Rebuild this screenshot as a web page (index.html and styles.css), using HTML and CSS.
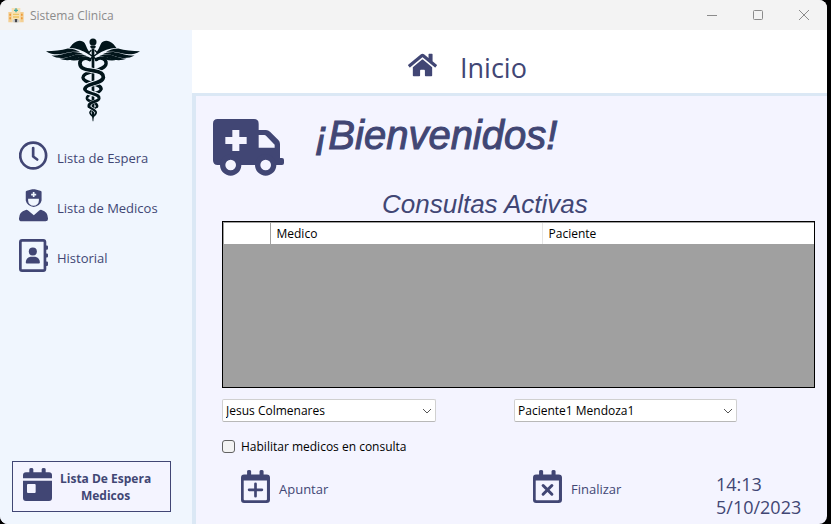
FILE: index.html
```html
<!DOCTYPE html>
<html lang="es">
<head>
<meta charset="utf-8">
<title>Sistema Clinica</title>
<link rel="stylesheet" href="styles.css">
</head>
<body>
<div class="window">
  <header class="titlebar">
    <svg class="app-icon" viewBox="0 0 48 48" aria-hidden="true">
      <path fill="#f3cf93" d="M1 15h11v31H1zM36 15h11v31H36z"/>
      <path fill="#f9e2b4" d="M11 3h26v43H11z"/>
      <path fill="#ee9b3a" d="M4 20h5v6H4zM4 31h5v6H4zM39 20h5v6h-5zM39 31h5v6h-5z"/>
      <path fill="#3fa9a5" d="M22 4h4v4h4v4h-4v4h-4v-4h-4V8h4z"/>
      <path fill="#e9b73c" d="M16 20h4v4h-4zM22 20h4v4h-4zM28 20h4v4h-4zM16 28h4v4h-4zM22 28h4v4h-4zM28 28h4v4h-4z"/>
      <path fill="#45464d" d="M20 36h8v10h-8z"/>
      <path fill="#c9ced3" d="M14 38h6v8h-6zM28 38h6v8h-6z"/>
    </svg>
    <span class="titlebar-text">Sistema Clinica</span>
    <div class="window-controls">
      <button type="button" aria-label="Minimizar"><svg viewBox="0 0 12 12"><path d="M1 6.500h10"/></svg></button>
      <button type="button" aria-label="Maximizar"><svg viewBox="0 0 12 12"><rect x="1.500" y="1.500" width="9" height="9" rx="1"/></svg></button>
      <button type="button" aria-label="Cerrar"><svg viewBox="0 0 12 12"><path d="M1 1l10 10M11 1L1 11"/></svg></button>
    </div>
  </header>

  <div class="body">
    <aside class="sidebar">
      <svg class="logo" viewBox="138 115 280 250" aria-hidden="true">
        <g fill="#02151b">
          <circle cx="278" cy="127" r="10.500"/>
          <path d="M272 137h12l3 5-5 4h-8l-5-4z"/>
          <g id="wing">
            <path d="M268 158C262 150 259 142 254 131C249 123 238 121 229 125C219 129 213 137 208 145C225 144 246 151 266 164z"/>
            <path d="M138 154C160 154 184 151 203 146C218 146 230 151 240 157C225 154 211 156 199 159C178 166 155 165 138 154z"/>
            <path d="M154 167C180 167 197 159 214 157C229 156 242 159 251 164C235 162 223 165 212 169C195 176 171 177 154 167z"/>
            <path d="M178 177C200 176 213 168 226 165C240 163 252 165 260 169C247 169 238 172 230 175C215 182 194 183 178 177z"/>
            <path d="M207 179C220 179 230 173 241 171C253 170 263 172 270 177C258 174 250 175 243 178C230 182 216 183 207 179z"/>
          </g>
          <use href="#wing" transform="translate(556 0) scale(-1 1)"/>
          <path d="M274 146h8v190l-3 27h-2l-3-27z"/>
        </g>
        <path fill="none" stroke="#02151b" stroke-width="4" stroke-linecap="round" d="M266 162l24 18M290 162l-24 18M272 152l-8 8M284 152l8 8"/>
        <!-- Back snake, then the front one with a light edge where they cross -->
        <g fill="none" stroke-linecap="round" stroke="#02151b">
          <path stroke-width="10" d="M288 179C302 170 318 178 317 191C316 203 300 208 278 214C258 219 247 224 248 233C249 243 262 246 278 251C292 255 302 258 302 267"/>
          <path stroke-width="8" d="M302 267C302 275 292 277 278 281C266 284 259 288 260 295C261 301 269 303 278 306C287 309 291 313 290 319"/>
          <path stroke-width="5" d="M290 319C289 325 268 328 269 338C270 343 274 346 278 349"/>
        </g>
        <g fill="none">
          <path stroke="#f0f6fe" stroke-width="16" d="M238 195C242 207 258 209 278 212C298 215 310 221 309 232C307 243 294 247 278 251C264 255 254 259 254 267C254 275 264 277 278 281C290 284 297 288 296 295"/>
          <path stroke="#f0f6fe" stroke-width="10" d="M296 295C295 301 287 303 278 306C269 309 265 313 266 319C267 325 288 328 287 338"/>
          <g stroke="#02151b" stroke-linecap="round">
            <path stroke-width="11" d="M268 179C254 170 238 178 239 191C240 207 258 209 278 212C298 215 310 221 309 232C307 243 294 247 278 251C264 255 254 259 254 267"/>
            <path stroke-width="9" d="M254 267C254 275 264 277 278 281C290 284 297 288 296 295C295 301 287 303 278 306C269 309 265 313 266 319"/>
            <path stroke-width="6" d="M266 319C267 325 288 328 287 338C286 343 282 346 279 348"/>
          </g>
        </g>
      </svg>

      <nav class="nav">
        <button type="button" class="nav-item">
          <svg class="icon" viewBox="57 28 86 98" aria-hidden="true">
            <circle cx="99" cy="77" r="38.500" fill="none" stroke="currentColor" stroke-width="8"/>
            <path d="M99 55v25l12 9" fill="none" stroke="currentColor" stroke-width="8" stroke-linecap="round" stroke-linejoin="round"/>
          </svg>
          <span>Lista de Espera</span>
        </button>
        <button type="button" class="nav-item">
          <svg class="icon" viewBox="57 177 86 98" aria-hidden="true">
            <path fill="currentColor" fill-rule="evenodd" d="M77 185q0-2 3-3l16-4q4-1 8 0l16 4q4 1 4 3v26a24 24 0 0 1-47 0zM98 186v5h-5v5h5v5h5v-5h5v-5h-5v-5zM84 206v5a16 16 0 0 0 32 0v-5z"/>
            <path fill="currentColor" d="M77 239q4-1 7 2l17 14 16-14q3-3 7-2q19 6 19 25v2q0 7-7 7H65q-8 0-8-7v-2q0-19 20-25z"/>
          </svg>
          <span>Lista de Medicos</span>
        </button>
        <button type="button" class="nav-item">
          <svg class="icon" viewBox="57 327 86 98" aria-hidden="true">
            <rect x="61" y="331" width="73" height="90" rx="5" fill="none" stroke="currentColor" stroke-width="8"/>
            <path fill="currentColor" d="M136 346h4q3 0 3 3v7q0 3-3 3h-4zM136 370h4q3 0 3 3v6q0 3-3 3h-4zM136 394h4q3 0 3 3v7q0 3-3 3h-4z"/>
            <circle cx="98" cy="364" r="12" fill="currentColor"/>
            <path fill="currentColor" d="M91 380h14q14 4 14 17q0 3-3 3H80q-3 0-3-3q0-13 14-17z"/>
          </svg>
          <span>Historial</span>
        </button>
      </nav>

      <button type="button" class="waiting-button">
        <svg class="icon" viewBox="69 81 87 99" aria-hidden="true">
          <path fill="currentColor" fill-rule="evenodd" d="M69 112v-9q0-9 9-9h10v-9q0-4 6-4t6 4v9h25v-9q0-4 6-4t6 4v9h10q9 0 9 9v9zM69 119h87v52q0 9-9 9H78q-9 0-9-9zM84 129q-3 0-3 3v21q0 3 3 3h20q3 0 3-3v-21q0-3-3-3z"/>
        </svg>
        <span>Lista De Espera<br>Medicos</span>
      </button>
    </aside>

    <div class="content">
      <div class="page-header">
        <svg class="home-icon" viewBox="0 0 576 512" aria-hidden="true">
          <path fill="currentColor" d="M280.37 148.26L96 300.11V464a16 16 0 0 0 16 16l112.06-.29a16 16 0 0 0 15.92-16V368a16 16 0 0 1 16-16h64a16 16 0 0 1 16 16v95.64a16 16 0 0 0 16 16.05L464 480a16 16 0 0 0 16-16V300L295.67 148.26a12.19 12.19 0 0 0-15.3 0zM571.6 251.47L488 182.56V44.05a12 12 0 0 0-12-12h-56a12 12 0 0 0-12 12v72.61L318.47 43a48 48 0 0 0-61 0L4.34 251.47a12 12 0 0 0-1.600 16.900l25.500 31A12 12 0 0 0 45.150 301l235.220-193.740a12.190 12.190 0 0 1 15.300 0L530.900 301a12 12 0 0 0 16.900-1.600l25.500-31a12 12 0 0 0-1.700-16.930z"/>
        </svg>
        <span>Inicio</span>
      </div>

      <main class="main">
        <div class="welcome">
          <svg class="ambulance" viewBox="0 0 213 171" aria-hidden="true">
            <path fill="currentColor" fill-rule="evenodd" d="M14 0h109q14 0 14 14v19h22q7 0 12 5l25 25q5 5 5 12v42h6q6 0 6 6v9q0 6-6 6H14q-14 0-14-14V14Q0 0 14 0zM58 33v21H37v21h21v21h21V75h22V54H79V33zM137 48v38h48v-9l-26-27q-2-2-5-2z"/>
            <circle cx="53" cy="138" r="24" fill="#f4f4ff" stroke="currentColor" stroke-width="16"/>
            <circle cx="158" cy="138" r="24" fill="#f4f4ff" stroke="currentColor" stroke-width="16"/>
          </svg>
          <h1>¡Bienvenidos!</h1>
        </div>

        <h2>Consultas Activas</h2>

        <div class="grid-box">
          <table>
            <thead>
              <tr><td class="corner"></td><th scope="col">Medico</th><th scope="col">Paciente</th></tr>
            </thead>
          </table>
        </div>

        <div class="selectors">
          <div class="combo">
            <select aria-label="Medico"><option>Jesus Colmenares</option></select>
            <svg viewBox="0 0 10 6" aria-hidden="true"><path d="M1 1l4 4 4-4"/></svg>
          </div>
          <div class="combo combo-wide">
            <select aria-label="Paciente"><option>Paciente1 Mendoza1</option></select>
            <svg viewBox="0 0 10 6" aria-hidden="true"><path d="M1 1l4 4 4-4"/></svg>
          </div>
        </div>

        <label class="check"><input type="checkbox"><span>Habilitar medicos en consulta</span></label>

        <div class="actions">
          <button type="button" class="action">
            <svg class="icon" viewBox="94 267 86 98" aria-hidden="true">
              <path fill="currentColor" fill-rule="evenodd" d="M94 289q0-9 9-9h9v-9q0-4 6-4t6 4v9h25v-9q0-4 6-4t6 4v9h9q10 0 10 9v67q0 9-10 9h-67q-9 0-9-9zM102 298v56q0 3 3 3h63q3 0 3-3v-56z"/>
              <path d="M137 308v37M118 326h38" stroke="currentColor" stroke-width="8" stroke-linecap="round"/>
            </svg>
            <span>Apuntar</span>
          </button>
          <button type="button" class="action">
            <svg class="icon" viewBox="94 267 86 98" aria-hidden="true">
              <path fill="currentColor" fill-rule="evenodd" d="M94 289q0-9 9-9h9v-9q0-4 6-4t6 4v9h25v-9q0-4 6-4t6 4v9h9q10 0 10 9v67q0 9-10 9h-67q-9 0-9-9zM102 298v56q0 3 3 3h63q3 0 3-3v-56z"/>
              <path d="M124 313l26 26M150 313l-26 26" stroke="currentColor" stroke-width="9" stroke-linecap="round"/>
            </svg>
            <span>Finalizar</span>
          </button>
          <div class="clock"><div>14:13</div><div>5/10/2023</div></div>
        </div>
      </main>
    </div>
  </div>
</div>
</body>
</html>
```
FILE: styles.css
```css
* {
  box-sizing: border-box;
}

body {
  margin: 0;
  background: #000;
  color: #414674;
  font-family: "Open Sans", "Noto Sans", sans-serif;
  font-size: 13px;
}

button {
  border: 0;
  padding: 0;
  background: none;
  color: inherit;
  font: inherit;
}

svg {
  display: block;
  flex: none;
}

.window {
  display: flex;
  flex-direction: column;
  min-height: 100vh;
  margin-right: 4px;
  overflow: hidden;
  border-radius: 8px;
  background: #f4f4ff;
}

.titlebar {
  display: flex;
  align-items: center;
  height: 30px;
  padding-left: 8px;
  background: #f3f3f3;
  color: #8b8b8b;
  font-size: 12px;
}

.app-icon {
  width: 16px;
  height: 16px;
  margin-right: 6px;
}

.window-controls {
  display: flex;
  margin-left: auto;
}

.window-controls button {
  display: flex;
  align-items: center;
  justify-content: center;
  width: 46px;
  height: 28px;
}

.window-controls svg {
  width: 12px;
  height: 12px;
  fill: none;
  stroke: #8b8b8b;
}

.body {
  display: flex;
  flex: 1;
}

.sidebar {
  display: flex;
  flex-direction: column;
  flex: none;
  width: 192px;
  padding: 8px 12px 12px;
  background: #f0f6fe;
}

.logo {
  width: 94px;
  height: 84px;
  margin-left: 34px;
}

.nav {
  display: flex;
  flex-direction: column;
  gap: 16px;
  margin: 16px 7px;
}

.icon {
  width: 29px;
  height: 33px;
}

.nav-item,
.action {
  display: flex;
  align-items: center;
  gap: 9px;
  height: 34px;
}

.nav-item span,
.action span {
  padding-top: 5px;
}

.waiting-button {
  display: flex;
  align-items: center;
  gap: 8px;
  width: 159px;
  height: 51px;
  margin-top: auto;
  padding: 0 0 4px 10px;
  border: 1px solid #414674;
  background: #f4f4ff;
  font-size: 12px;
  font-weight: 700;
  line-height: 17px;
}

.waiting-button span {
  padding-top: 4px;
}

.content {
  display: flex;
  flex: 1;
  flex-direction: column;
}

.page-header {
  display: flex;
  align-items: center;
  gap: 23px;
  height: 66px;
  padding: 12px 0 0 216px;
  border-bottom: 3px solid #dbe8f5;
  background: #fff;
  font-size: 27px;
}

.home-icon {
  width: 29px;
  height: 26px;
  margin-bottom: 6px;
}

.main {
  display: flex;
  flex: 1;
  flex-direction: column;
  padding: 23px 12px 5px 26px;
  border-left: 4px solid #dbe8f5;
}

.welcome {
  display: flex;
  gap: 31px;
  margin-left: -9px;
}

.ambulance {
  width: 71px;
  height: 57px;
}

h1,
h2 {
  margin: 0;
  font-family: "Liberation Sans", sans-serif;
  font-style: italic;
  font-weight: 400;
}

h1 {
  font-size: 40px;
  line-height: 32px;
  -webkit-text-stroke: 1px #414674;
}

h2 {
  margin: 14px 0 3px 160px;
  font-size: 26px;
  line-height: 28px;
}

.grid-box {
  flex: 1;
  min-height: 120px;
  border: 1px solid #000;
  background: #a0a0a0;
  padding: 1px 0 0 1px;
}

table {
  width: 100%;
  border-collapse: collapse;
  table-layout: fixed;
  background: #fff;
  color: #000;
  font-size: 12px;
}

.corner {
  width: 46px;
  padding: 0;
  border-right: 1px solid #a0a0a0;
}

th {
  height: 21px;
  padding: 0 6px;
  border-right: 1px solid #e5e5e5;
  font-weight: 400;
  text-align: left;
}

th:last-child {
  border-right: 0;
}

.selectors {
  display: grid;
  grid-template-columns: 292fr 301fr;
  margin-top: 11px;
}

.combo {
  position: relative;
  width: 214px;
}

.combo-wide {
  width: 223px;
}

.combo select {
  display: block;
  width: 100%;
  height: 23px;
  padding: 0 20px 0 3px;
  appearance: none;
  border: 1px solid #d0d0d0;
  border-bottom-color: #b8b8b8;
  border-radius: 2px;
  background: #fff;
  color: #000;
  font: inherit;
  font-size: 12px;
}

.combo svg {
  position: absolute;
  top: 9px;
  right: 4px;
  width: 10px;
  height: 6px;
  fill: none;
  stroke: #555;
  pointer-events: none;
}

.check {
  display: flex;
  align-items: center;
  align-self: flex-start;
  gap: 6px;
  height: 18px;
  margin-top: 15px;
  color: #000;
  font-size: 12px;
}

.check input {
  width: 13px;
  height: 13px;
  margin: 0;
  appearance: none;
  border: 1px solid #626262;
  border-radius: 3px;
  background: #f3f3f3;
}

.actions {
  display: grid;
  grid-template-columns: 292fr 202fr 99fr;
  margin-top: 14px;
}

.action {
  margin-left: 19px;
}

.clock {
  padding-top: 4px;
  font-size: 18px;
  line-height: 23px;
}
```
